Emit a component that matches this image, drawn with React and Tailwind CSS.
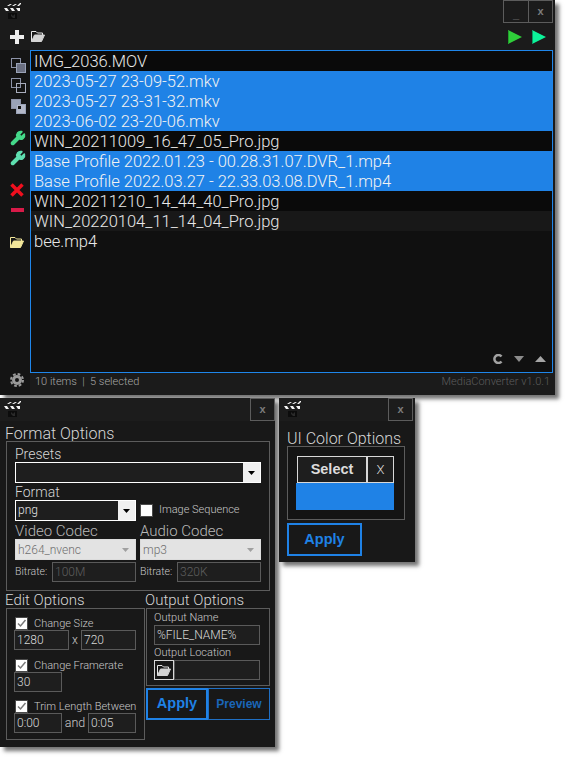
import { Wrench } from 'lucide-react';

const files = [
  { name: 'IMG_2036.MOV', row: 'bg-[#0a0a0a]' },
  { name: '2023-05-27 23-09-52.mkv', selected: true },
  { name: '2023-05-27 23-31-32.mkv', selected: true },
  { name: '2023-06-02 23-20-06.mkv', selected: true },
  { name: 'WIN_20211009_16_47_05_Pro.jpg', row: 'bg-[#0a0a0a]' },
  { name: 'Base Profile 2022.01.23 - 00.28.31.07.DVR_1.mp4', selected: true },
  { name: 'Base Profile 2022.03.27 - 22.33.03.08.DVR_1.mp4', selected: true },
  { name: 'WIN_20211210_14_44_40_Pro.jpg', row: 'bg-[#0a0a0a]' },
  { name: 'WIN_20220104_11_14_04_Pro.jpg', row: 'bg-[#181818]' },
  { name: 'bee.mp4', row: '' },
];

const Clapper = () => (
  <svg width="17" height="17" viewBox="0 0 17 17" className="shrink-0">
    <path d="M3 3l3-2h2L5 3zM8 3l3-2h2l-3 2zM13 3l3-3h1v1l-2 2zM0 5h3l2 3H2zM6 5h3l2 3H8zM12 5h4v3h-2z" fill="#f4f4f4" />
    <path d="M4 10h9v6H4z" fill="#0c0c0c" />
    <path d="M7 11l2 2 2-2v4H9l-2-2z" fill="#2a2a2a" />
  </svg>
);

const TitleButton = ({ children, className = '' }) => (
  <div className={`w-[25px] h-[23px] border border-[#5c5c5c] flex items-center justify-center text-[#7d7d7d] font-bold text-[11px] font-['Liberation_Sans',sans-serif] ${className}`}>
    {children}
  </div>
);

const Layers = ({ variant }) => (
  <svg width="15" height="15" viewBox="0 0 15 15" className="block">
    <rect x="0.5" y="0.5" width="9" height="9" fill={variant === 2 ? '#9aa3b8' : 'none'} stroke="#8d93a8" />
    <rect x="5.5" y="5.5" width="9" height="9" fill={variant === 2 ? '#b3b8c9' : variant === 0 ? '#6b7082' : 'none'} stroke={variant === 1 ? '#a8adbd' : '#9aa3b8'} />
    {variant === 2 && <rect x="7" y="7" width="3" height="3" fill="#111" />}
  </svg>
);

const Triangle = ({ color, edge }) => (
  <svg width="14" height="14" viewBox="0 0 14 14" className="block">
    <path d="M0 0 L14 7 L0 14 Z" fill={color} />
    <path d="M0.500 0 V14" stroke={edge} />
  </svg>
);

const Folder = ({ fill, line = '#e8e8e8' }) => (
  <svg width="14" height="11" viewBox="0 0 14 11" className="block">
    <path d="M0.500 10.500V0.500H5L6.500 2H11.500V4" fill="#161616" stroke={line} />
    <path d="M0.500 10.500L3.500 4H13.500L10.500 10.500Z" fill={fill} stroke={fill} />
  </svg>
);

const Field = ({ value, className = '', disabled }) => (
  <div className={`h-[20px] border border-[#5a5a5a] bg-[#1e1e1e] pl-[2px] text-[12px] leading-[18px] overflow-hidden ${disabled ? 'text-[#5f5f5f]' : 'text-[#d8d8d8]'} ${className}`}>
    {value}
  </div>
);

const Caret = ({ color = '#000' }) => (
  <svg width="7" height="4" viewBox="0 0 7 4"><path d="M0 0h7L3.500 4z" fill={color} /></svg>
);

const Combo = ({ value, className = '' }) => (
  <div className={`h-[21px] border border-white bg-[#1e1e1e] flex ${className}`}>
    <div className="flex-1 pl-[2px] text-[12px] leading-[19px] text-[#e4e4e4]">{value}</div>
    <div className="w-[17px] bg-[#f0f0f0] flex items-center justify-center"><Caret /></div>
  </div>
);

const DisabledCombo = ({ value }) => (
  <div className="h-[21px] w-[121px] border border-[#dcdcdc] bg-[#e3e3e3] flex items-center pl-[2px] pr-[6px] justify-between text-[12px] text-[#6f6f6f]">
    {value}
    <Caret color="#a0a0a0" />
  </div>
);

const Check = ({ checked }) => (
  <div className="w-[13px] h-[13px] bg-white border border-[#4a4a4a] flex items-center justify-center shrink-0">
    {checked && (
      <svg width="11" height="11" viewBox="0 0 11 11">
        <path d="M2 5.500L4.500 8L9.500 2" fill="none" stroke="#7a7a7a" strokeWidth="1.500" />
      </svg>
    )}
  </div>
);

const CheckLabel = ({ children, className = '' }) => (
  <label className={`flex items-center gap-[6px] ml-[1px] text-[11px] leading-[13px] text-[#c8c8c8] whitespace-nowrap ${className}`}>
    <Check checked />
    {children}
  </label>
);

const MainWindow = () => (
  <section className="absolute left-0 top-0 w-[555px] h-[395px] bg-[#1b1b1b] flex flex-col shadow-[4px_4px_4px_rgba(0,0,0,0.55)]">
    <header className="h-[23px] flex items-start justify-between pl-[4px] pr-[2px] shrink-0">
      <div className="pt-[3px]"><Clapper /></div>
      <div className="flex">
        <TitleButton className="border-r-0 items-end"><span className="leading-[16px]">_</span></TitleButton>
        <TitleButton>x</TitleButton>
      </div>
    </header>
    <div className="h-[27px] flex items-center justify-between pl-[10px] pr-[9px] shrink-0">
      <div className="flex items-center gap-[7px]">
        <svg width="14" height="14" viewBox="0 0 14 14" className="block"><path d="M5 0h4v5h5v4H9v5H5V9H0V5h5z" fill="#efefef" /></svg>
        <Folder fill="#d4d4d4" />
      </div>
      <div className="flex items-center gap-[10px]">
        <Triangle color="#2fcf3a" edge="#22a02c" />
        <Triangle color="#0cf39a" edge="#0a9a66" />
      </div>
    </div>
    <div className="flex-1 flex min-h-0">
      <aside className="w-[30px] shrink-0 bg-[#141414] flex flex-col items-start pl-[10px] pt-[8px]">
        <div className="ml-[1px]"><Layers variant={0} /></div>
        <div className="ml-[1px] mt-[5px]"><Layers variant={1} /></div>
        <div className="ml-[1px] mt-[6px]"><Layers variant={2} /></div>
        <Wrench size={16} color="#45d98a" fill="#45d98a" className="mt-[16px]" />
        <Wrench size={16} color="#5fe0b0" fill="#5fe0b0" className="mt-[4px]" />
        <svg width="14" height="14" viewBox="0 0 14 14" className="block mt-[17px]"><path d="M1.500 1.500L12.500 12.500M12.500 1.500L1.500 12.500" stroke="#f00f1e" strokeWidth="3.500" /></svg>
        <div className="w-[13px] h-[4px] bg-[#d81a48] mt-[11px] ml-[1px]" />
        <div className="mt-[25px]"><Folder fill="#f3e79a" line="#f3e79a" /></div>
        <svg width="14" height="14" viewBox="0 0 14 14" className="block mt-[125px]">
          <circle cx="7" cy="7" r="3.500" fill="none" stroke="#9a9a9a" strokeWidth="3" />
          <circle cx="7" cy="7" r="6" fill="none" stroke="#9a9a9a" strokeWidth="2" strokeDasharray="2.700 2" />
        </svg>
      </aside>
      <div className="flex-1 min-w-0 flex flex-col pr-[2px]">
        <div className="h-[323px] border border-[#1f86ea] bg-[#101010] relative shrink-0">
          {files.map((file) => (
            <div
              key={file.name}
              className={`h-[20px] pl-[3px] text-[16.500px] leading-[21px] whitespace-nowrap ${file.selected ? 'bg-[#1f82e6] text-[#f2f2f2]' : `${file.row} text-[#e8e8e8]`}`}
            >
              {file.name}
            </div>
          ))}
          <div className="absolute right-[6px] bottom-[8px] flex items-center gap-[11px]">
            <svg width="10" height="10" viewBox="0 0 10 10" className="block"><path d="M8.500 2.500A4 4 0 1 0 8.500 7.500" fill="none" stroke="#a2a2a2" strokeWidth="2.500" /></svg>
            <svg width="10" height="6" viewBox="0 0 10 6" className="block"><path d="M0 0h10L5 6z" fill="#8c8c8c" /></svg>
            <svg width="11" height="6" viewBox="0 0 11 6" className="block"><path d="M0 6h11L5.500 0z" fill="#a6a6a6" /></svg>
          </div>
        </div>
        <div className="flex justify-between pl-[5px] pr-[3px] pt-[2px] text-[11px] leading-[14px]">
          <span className="text-[#a8a8a8]">10 items&nbsp; |&nbsp; 5 selected</span>
          <span className="text-[#5e5e5e]">MediaConverter v1.0.1</span>
        </div>
      </div>
    </div>
  </section>
);

const FormatWindow = () => (
  <section className="absolute left-0 top-[398px] w-[275px] h-[349px] bg-[#181818] shadow-[4px_4px_4px_rgba(0,0,0,0.55)] flex flex-col">
    <header className="h-[23px] flex justify-between items-start pl-[4px] shrink-0 bg-[#1c1c1c]">
      <div className="pt-[3px]"><Clapper /></div>
      <TitleButton>x</TitleButton>
    </header>
    <div className="pl-[6px] pr-[5px] flex flex-col">
      <h2 className="h-[20px] text-[16px] leading-[25px] -ml-[1px] text-[#d6d6d6]">Format Options</h2>
      <div className="border border-[#5c5c5c] h-[150px] px-[8px] pt-[5px] flex flex-col">
        <div className="text-[14px] leading-[14px] text-[#d6d6d6]">Presets</div>
        <Combo value="" className="w-[246px] mt-[1px]" />
        <div className="text-[14px] leading-[16px] mt-[1px] text-[#d6d6d6]">Format</div>
        <div className="flex items-center">
          <Combo value="png" className="w-[121px]" />
          <div className="ml-[4px]"><Check /></div>
          <span className="ml-[6px] text-[11px] text-[#c8c8c8]">Image Sequence</span>
        </div>
        <div className="flex h-[17px] mt-[1px] text-[15px] leading-[19px] text-[#b8b8b8]">
          <div className="w-[125px]">Video Codec</div>
          <div>Audio Codec</div>
        </div>
        <div className="flex gap-[4px]">
          <DisabledCombo value="h264_nvenc" />
          <DisabledCombo value="mp3" />
        </div>
        <div className="flex items-center mt-[2px] text-[10.500px] text-[#c8c8c8]">
          <span className="w-[37px]">Bitrate:</span>
          <Field value="100M" className="w-[84px]" disabled />
          <span className="w-[37px] ml-[4px]">Bitrate:</span>
          <Field value="320K" className="w-[84px]" disabled />
        </div>
      </div>
      <div className="flex gap-[1px]">
        <div className="w-[139px]">
          <h2 className="h-[17px] text-[15px] leading-[19px] -ml-[1px] text-[#d6d6d6]">Edit Options</h2>
          <div className="border border-[#5c5c5c] h-[132px] px-[7px] pt-[8px] flex flex-col">
            <CheckLabel>Change Size</CheckLabel>
            <div className="flex items-center text-[12px] text-[#c8c8c8]">
              <Field value="1280" className="w-[55px]" />
              <span className="w-[12px] text-center">x</span>
              <Field value="720" className="w-[55px]" />
            </div>
            <CheckLabel className="mt-[9px]">Change Framerate</CheckLabel>
            <Field value="30" className="w-[48px]" />
            <CheckLabel className="mt-[8px]">Trim Length Between</CheckLabel>
            <div className="flex items-center text-[12.500px] text-[#c8c8c8]">
              <Field value="0:00" className="w-[48px]" />
              <span className="w-[26px] text-center">and</span>
              <Field value="0:05" className="w-[48px]" />
            </div>
          </div>
        </div>
        <div className="w-[124px]">
          <h2 className="h-[17px] text-[15px] leading-[19px] -ml-[1px] text-[#d6d6d6]">Output Options</h2>
          <div className="border border-[#5c5c5c] h-[78px] px-[7px] pt-[2px] flex flex-col">
            <div className="text-[11px] leading-[14px] text-[#c8c8c8]">Output Name</div>
            <Field value="%FILE_NAME%" className="w-[106px]" />
            <div className="text-[11px] leading-[14px] mt-[1px] text-[#c8c8c8]">Output Location</div>
            <div className="flex h-[20px] w-[106px]">
              <div className="w-[20px] border border-[#d8d8d8] flex items-center justify-center"><Folder fill="#d4d4d4" /></div>
              <Field value="" className="flex-1" />
            </div>
          </div>
          <div className="flex mt-[2px] font-['Liberation_Sans',sans-serif]">
            <div className="w-[62px] h-[32px] border-2 border-[#1f82e6] text-[#1f82e6] font-bold text-[14.500px] flex items-center justify-center">Apply</div>
            <div className="w-[62px] h-[32px] border border-[#1f6fc4] text-[#1a66b8] font-bold text-[12px] flex items-center justify-center">Preview</div>
          </div>
        </div>
      </div>
    </div>
  </section>
);

const ColorWindow = () => (
  <section className="absolute left-[279px] top-[398px] w-[136px] h-[164px] bg-[#181818] shadow-[4px_4px_4px_rgba(0,0,0,0.55)] flex flex-col">
    <header className="h-[23px] flex justify-between items-start pl-[5px] pr-[2px] shrink-0 bg-[#1c1c1c]">
      <div className="pt-[3px]"><Clapper /></div>
      <TitleButton>x</TitleButton>
    </header>
    <div className="pl-[8px] flex flex-col">
      <h2 className="h-[18px] mt-[7px] text-[16px] leading-[21px] text-[#d6d6d6]">UI Color Options</h2>
      <div className="w-[118px] h-[74px] border border-[#5c5c5c] bg-[#141414] pl-[8px] pt-[9px]">
        <div className="flex w-[97px] h-[27px] ml-[1px]">
          <div className="w-[70px] border border-[#d8d8d8] bg-[#1e1e1e] text-[#dcdcdc] font-bold text-[14.500px] font-['Liberation_Sans',sans-serif] flex items-center justify-center">Select</div>
          <div className="w-[27px] border border-[#d8d8d8] bg-[#1e1e1e] text-[#dcdcdc] text-[13px] flex items-center justify-center">X</div>
        </div>
        <div className="w-[98px] h-[27px] bg-[#1f82e6]" />
      </div>
      <div className="w-[75px] h-[33px] border-2 border-[#1f82e6] text-[#1f82e6] font-bold text-[14.500px] font-['Liberation_Sans',sans-serif] flex items-center justify-center mt-[3px]">Apply</div>
    </div>
  </section>
);

export default function App() {
  return (
    <div className="relative w-[573px] h-[760px] bg-white overflow-hidden font-['Roboto',sans-serif] font-light">
      <MainWindow />
      <FormatWindow />
      <ColorWindow />
    </div>
  );
}
